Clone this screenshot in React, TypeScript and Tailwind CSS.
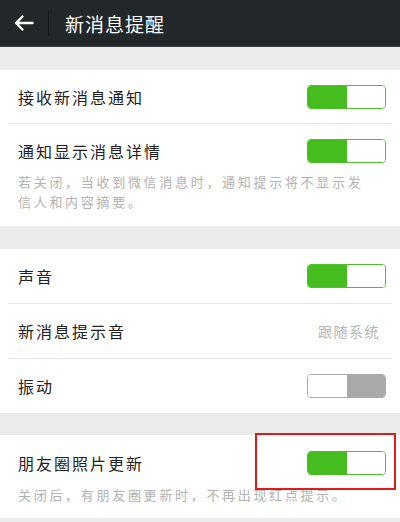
import React from "react";

const font = { fontFamily: '"Noto Sans CJK SC", "Noto Sans", sans-serif' };

function Toggle({ on }: { on: boolean }) {
  if (on) {
    return (
      <div className="flex h-[24px] w-[79px] overflow-hidden rounded-[4px] border border-[#4cbf2a] bg-white">
        <div className="h-full w-[39px] bg-[#45bd1f]" />
        <div className="h-full flex-1 bg-white" />
      </div>
    );
  }
  return (
    <div className="flex h-[24px] w-[79px] overflow-hidden rounded-[4px] border border-[#aaaaaa] bg-white">
      <div className="h-full w-[39px] bg-white" />
      <div className="h-full flex-1 bg-[#a9a9a9]" />
    </div>
  );
}

function Row({
  label,
  right,
  divider,
  h = "h-[54px]",
}: {
  label: string;
  right: React.ReactNode;
  divider?: boolean;
  h?: string;
}) {
  return (
    <div className="px-[8px]">
      <div
        className={`flex ${h} items-center justify-between pl-[10px] pr-[6px] ${
          divider ? "border-b border-[#e6e6e6]" : ""
        }`}
      >
        <span className="text-[16px] leading-none tracking-[2px] text-[#222]">{label}</span>
        {right}
      </div>
    </div>
  );
}

export default function App() {
  return (
    <div className="h-[522px] w-[400px] overflow-hidden bg-[#ebebeb]" style={font}>
      {/* header */}
      <div className="flex h-[47px] items-center border-b border-[#3c4043] bg-[#22272a]">
        <div className="flex w-[48px] items-center justify-center">
          <svg width="20" height="16" viewBox="0 0 20 16" fill="none">
            <path d="M18.5 8H2.5M8.5 1.5L2 8l6.5 6.5" stroke="#fff" strokeWidth="2.4" strokeLinecap="round" strokeLinejoin="round" />
          </svg>
        </div>
        <div className="h-[25px] w-px bg-[#141719]" />
        <span className="ml-[16px] text-[19px] leading-none tracking-[1px] text-white">新消息提醒</span>
      </div>

      <div className="h-[23px]" />

      {/* section 1 */}
      <div className="bg-white">
        <Row label="接收新消息通知" right={<Toggle on />} divider />
        <Row label="通知显示消息详情" right={<Toggle on />} />
        <div className="-mt-[6px] pb-[14px] pl-[18px] text-[13px] leading-[20px] tracking-[2.7px] text-[#b2b2b2]">
          若关闭，当收到微信消息时，通知提示将不显示发
          <br />
          信人和内容摘要。
        </div>
      </div>

      <div className="h-[23px]" />

      {/* section 2 */}
      <div className="bg-white">
        <Row label="声音" right={<Toggle on />} divider h="h-[55px]" />
        <Row
          label="新消息提示音"
          right={<span className="mr-[6px] text-[14px] leading-none tracking-[1.5px] text-[#b5b5b5]">跟随系统</span>}
          divider
          h="h-[55px]"
        />
        <Row label="振动" right={<Toggle on={false} />} h="h-[54px]" />
      </div>

      <div className="h-[22px]" />

      {/* section 3 */}
      <div className="relative bg-white">
        <Row label="朋友圈照片更新" right={<Toggle on />} h="h-[56px]" />
        <div className="-mt-[6px] pb-[13px] pl-[18px] text-[13px] leading-[20px] tracking-[2.7px] text-[#b2b2b2]">
          关闭后，有朋友圈更新时，不再出现红点提示。
        </div>
        <div className="absolute left-[255px] top-[-2px] h-[57px] w-[141px] border-2 border-[#e3191b]" />
      </div>
    </div>
  );
}
